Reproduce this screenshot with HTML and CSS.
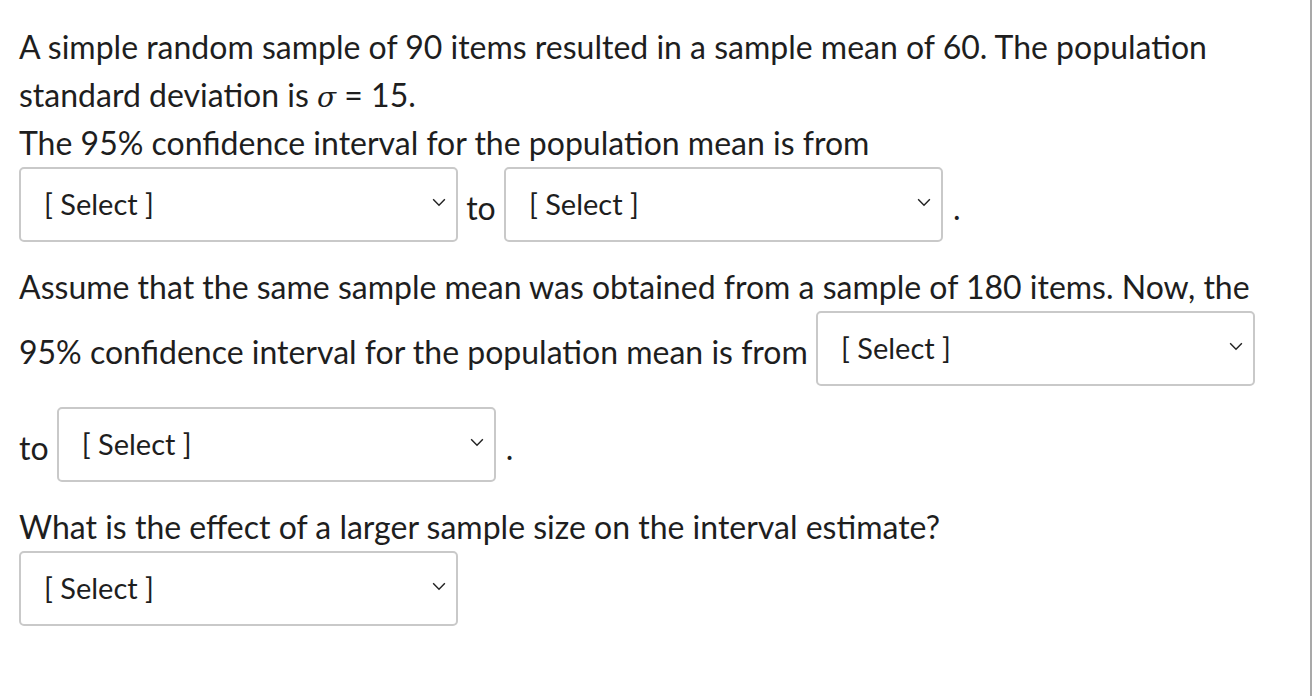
FILE: index.html
```html
<!DOCTYPE html>
<html lang="en">
<head>
<meta charset="utf-8">
<title>Confidence interval question</title>
<link rel="stylesheet" href="styles.css">
</head>
<body>
<div class="page">
  <div class="question">
    <p class="para">A simple random sample of 90 items resulted in a sample mean of 60. The population standard deviation is <span class="sigma">σ</span> = 15.</p>
    <p class="para">The 95% confidence interval for the population mean is from</p>
    <p class="para"><span class="dropdown"><span class="dd-text">[ Select ]</span><svg class="chev" viewBox="0 0 16 10" width="16" height="9"><path d="M1.5 1.5 L8 8 L14.5 1.5" fill="none" stroke="#222" stroke-width="1.6"/></svg></span> to <span class="dropdown"><span class="dd-text">[ Select ]</span><svg class="chev" viewBox="0 0 16 10" width="16" height="9"><path d="M1.5 1.5 L8 8 L14.5 1.5" fill="none" stroke="#222" stroke-width="1.6"/></svg></span><span class="stop">.</span></p>
    <p class="para">Assume that the same sample mean was obtained from a sample of 180 items. Now, the 95% confidence interval for the population mean is from <span class="dropdown"><span class="dd-text">[ Select ]</span><svg class="chev" viewBox="0 0 16 10" width="16" height="9"><path d="M1.5 1.5 L8 8 L14.5 1.5" fill="none" stroke="#222" stroke-width="1.6"/></svg></span> to <span class="dropdown"><span class="dd-text">[ Select ]</span><svg class="chev" viewBox="0 0 16 10" width="16" height="9"><path d="M1.5 1.5 L8 8 L14.5 1.5" fill="none" stroke="#222" stroke-width="1.6"/></svg></span><span class="stop">.</span></p>
    <p class="para">What is the effect of a larger sample size on the interval estimate?</p>
    <p class="para"><span class="dropdown last"><span class="dd-text">[ Select ]</span><svg class="chev" viewBox="0 0 16 10" width="16" height="9"><path d="M1.5 1.5 L8 8 L14.5 1.5" fill="none" stroke="#222" stroke-width="1.6"/></svg></span></p>
  </div>
</div>
</body>
</html>
```

FILE: styles.css
```css
* { box-sizing: border-box; }
html, body { margin: 0; padding: 0; background: #ffffff; }
.page {
  width: 1312px;
  height: 696px;
  border-right: 2px solid #a9a9a9;
  padding: 23px 0 0 19px;
  font-family: "Lato", "Liberation Sans", sans-serif;
  font-size: 32px;
  line-height: 48px;
  color: #1e1e1e;
  overflow: hidden;
}
.question { width: 1262px; }
.para { margin: 0; }
.sigma { font-style: italic; font-family: "DejaVu Serif", serif; font-size: 28px; line-height: 20px; }
.stop { margin-left: 10px; }
.dropdown {
  display: inline-flex;
  align-items: center;
  justify-content: space-between;
  width: 439px;
  height: 75px;
  border: 2px solid #c9c9c9;
  border-radius: 5px;
  background: #fff;
  padding: 0 9px 0 23px;
  vertical-align: 5px;
  margin: 0 0 21px 0;
}
.dropdown.last { margin-bottom: 0; }
.dd-text {
  display: inline-block;
  font-size: 29px;
  line-height: 36px;
  white-space: nowrap;
  margin-top: -2px;
}
.chev { flex: none; margin-top: -4px; }
```
